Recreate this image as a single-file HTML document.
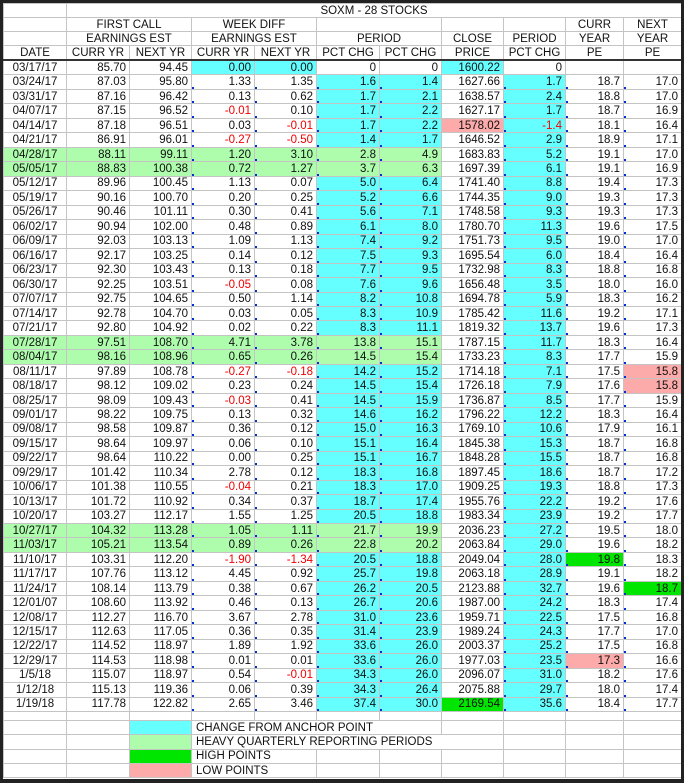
<!DOCTYPE html>
<html><head><meta charset="utf-8"><style>
html,body{margin:0;padding:0;background:#222;width:684px;height:783px;overflow:hidden}
#w{position:absolute;left:3px;top:3px;width:678px;height:776px;background:#fff;overflow:hidden}
table{border-collapse:collapse;table-layout:fixed;width:678px;font-family:"Liberation Sans",Arial,sans-serif;font-size:11.5px;color:#111}
td{border:1px solid #c4c4c4;padding:0 3px 0 0;text-align:right;white-space:nowrap;overflow:hidden;line-height:12px;position:relative}
tr.h td{text-align:center;padding:0;height:13px}
tr.h4 td{border-bottom:2px solid #333;height:13px}
tr.d td{height:13.48px}
tr.d td:first-child{text-align:center;padding:0}
tr.d:not(.f) td:nth-child(n+4):not(:nth-child(8))::after{content:"";position:absolute;left:0;bottom:0;width:2px;height:2px;background:#0030d0}
.c{background:#6ff}.g{background:#adfdad}.G{background:#00e600}.p{background:#fcaaaa}.r{color:#f00000}
tr.gr td:nth-child(-n+7){background:#adfdad}
tr.d td:nth-child(n+6):nth-child(-n+7),tr.d td:nth-child(9){background:#6ff}
tr.gr td:nth-child(n+6):nth-child(-n+7){background:#adfdad}
tr.f td:nth-child(n+6):nth-child(-n+7),tr.f td:nth-child(9){background:#fff}
tr.l td{height:13.3px;text-align:left;padding:0 0 0 4px}
tr.b td{height:8px}
</style></head><body><div id="w">
<table>
<colgroup><col style="width:63px"><col style="width:63px"><col style="width:62px"><col style="width:63px"><col style="width:62px"><col style="width:63px"><col style="width:62px"><col style="width:62px"><col style="width:62px"><col style="width:58px"><col style="width:58px"></colgroup>
<tr class="h"><td></td><td colspan="10">SOXM - 28 STOCKS</td></tr>
<tr class="h"><td></td><td colspan="2">FIRST CALL</td><td colspan="2">WEEK DIFF</td><td colspan="2"></td><td></td><td></td><td>CURR</td><td>NEXT</td></tr>
<tr class="h"><td></td><td colspan="2">EARNINGS EST</td><td colspan="2">EARNINGS EST</td><td colspan="2">PERIOD</td><td>CLOSE</td><td>PERIOD</td><td>YEAR</td><td>YEAR</td></tr>
<tr class="h h4"><td>DATE</td><td>CURR YR</td><td>NEXT YR</td><td>CURR YR</td><td>NEXT YR</td><td>PCT CHG</td><td>PCT CHG</td><td>PRICE</td><td>PCT CHG</td><td>PE</td><td>PE</td></tr>
<tr class="d f"><td>03/17/17</td><td>85.70</td><td>94.45</td><td class="c">0.00</td><td class="c">0.00</td><td>0</td><td>0</td><td class="c">1600.22</td><td>0</td><td></td><td></td></tr>
<tr class="d"><td>03/24/17</td><td>87.03</td><td>95.80</td><td>1.33</td><td>1.35</td><td>1.6</td><td>1.4</td><td>1627.66</td><td>1.7</td><td>18.7</td><td>17.0</td></tr>
<tr class="d"><td>03/31/17</td><td>87.16</td><td>96.42</td><td>0.13</td><td>0.62</td><td>1.7</td><td>2.1</td><td>1638.57</td><td>2.4</td><td>18.8</td><td>17.0</td></tr>
<tr class="d"><td>04/07/17</td><td>87.15</td><td>96.52</td><td class="r">-0.01</td><td>0.10</td><td>1.7</td><td>2.2</td><td>1627.17</td><td>1.7</td><td>18.7</td><td>16.9</td></tr>
<tr class="d"><td>04/14/17</td><td>87.18</td><td>96.51</td><td>0.03</td><td class="r">-0.01</td><td>1.7</td><td>2.2</td><td class="p">1578.02</td><td class="r">-1.4</td><td>18.1</td><td>16.4</td></tr>
<tr class="d"><td>04/21/17</td><td>86.91</td><td>96.01</td><td class="r">-0.27</td><td class="r">-0.50</td><td>1.4</td><td>1.7</td><td>1646.52</td><td>2.9</td><td>18.9</td><td>17.1</td></tr>
<tr class="d gr"><td>04/28/17</td><td>88.11</td><td>99.11</td><td>1.20</td><td>3.10</td><td>2.8</td><td>4.9</td><td>1683.83</td><td>5.2</td><td>19.1</td><td>17.0</td></tr>
<tr class="d gr"><td>05/05/17</td><td>88.83</td><td>100.38</td><td>0.72</td><td>1.27</td><td>3.7</td><td>6.3</td><td>1697.39</td><td>6.1</td><td>19.1</td><td>16.9</td></tr>
<tr class="d"><td>05/12/17</td><td>89.96</td><td>100.45</td><td>1.13</td><td>0.07</td><td>5.0</td><td>6.4</td><td>1741.40</td><td>8.8</td><td>19.4</td><td>17.3</td></tr>
<tr class="d"><td>05/19/17</td><td>90.16</td><td>100.70</td><td>0.20</td><td>0.25</td><td>5.2</td><td>6.6</td><td>1744.35</td><td>9.0</td><td>19.3</td><td>17.3</td></tr>
<tr class="d"><td>05/26/17</td><td>90.46</td><td>101.11</td><td>0.30</td><td>0.41</td><td>5.6</td><td>7.1</td><td>1748.58</td><td>9.3</td><td>19.3</td><td>17.3</td></tr>
<tr class="d"><td>06/02/17</td><td>90.94</td><td>102.00</td><td>0.48</td><td>0.89</td><td>6.1</td><td>8.0</td><td>1780.70</td><td>11.3</td><td>19.6</td><td>17.5</td></tr>
<tr class="d"><td>06/09/17</td><td>92.03</td><td>103.13</td><td>1.09</td><td>1.13</td><td>7.4</td><td>9.2</td><td>1751.73</td><td>9.5</td><td>19.0</td><td>17.0</td></tr>
<tr class="d"><td>06/16/17</td><td>92.17</td><td>103.25</td><td>0.14</td><td>0.12</td><td>7.5</td><td>9.3</td><td>1695.54</td><td>6.0</td><td>18.4</td><td>16.4</td></tr>
<tr class="d"><td>06/23/17</td><td>92.30</td><td>103.43</td><td>0.13</td><td>0.18</td><td>7.7</td><td>9.5</td><td>1732.98</td><td>8.3</td><td>18.8</td><td>16.8</td></tr>
<tr class="d"><td>06/30/17</td><td>92.25</td><td>103.51</td><td class="r">-0.05</td><td>0.08</td><td>7.6</td><td>9.6</td><td>1656.48</td><td>3.5</td><td>18.0</td><td>16.0</td></tr>
<tr class="d"><td>07/07/17</td><td>92.75</td><td>104.65</td><td>0.50</td><td>1.14</td><td>8.2</td><td>10.8</td><td>1694.78</td><td>5.9</td><td>18.3</td><td>16.2</td></tr>
<tr class="d"><td>07/14/17</td><td>92.78</td><td>104.70</td><td>0.03</td><td>0.05</td><td>8.3</td><td>10.9</td><td>1785.42</td><td>11.6</td><td>19.2</td><td>17.1</td></tr>
<tr class="d"><td>07/21/17</td><td>92.80</td><td>104.92</td><td>0.02</td><td>0.22</td><td>8.3</td><td>11.1</td><td>1819.32</td><td>13.7</td><td>19.6</td><td>17.3</td></tr>
<tr class="d gr"><td>07/28/17</td><td>97.51</td><td>108.70</td><td>4.71</td><td>3.78</td><td>13.8</td><td>15.1</td><td>1787.15</td><td>11.7</td><td>18.3</td><td>16.4</td></tr>
<tr class="d gr"><td>08/04/17</td><td>98.16</td><td>108.96</td><td>0.65</td><td>0.26</td><td>14.5</td><td>15.4</td><td>1733.23</td><td>8.3</td><td>17.7</td><td>15.9</td></tr>
<tr class="d"><td>08/11/17</td><td>97.89</td><td>108.78</td><td class="r">-0.27</td><td class="r">-0.18</td><td>14.2</td><td>15.2</td><td>1714.18</td><td>7.1</td><td>17.5</td><td class="p">15.8</td></tr>
<tr class="d"><td>08/18/17</td><td>98.12</td><td>109.02</td><td>0.23</td><td>0.24</td><td>14.5</td><td>15.4</td><td>1726.18</td><td>7.9</td><td>17.6</td><td class="p">15.8</td></tr>
<tr class="d"><td>08/25/17</td><td>98.09</td><td>109.43</td><td class="r">-0.03</td><td>0.41</td><td>14.5</td><td>15.9</td><td>1736.87</td><td>8.5</td><td>17.7</td><td>15.9</td></tr>
<tr class="d"><td>09/01/17</td><td>98.22</td><td>109.75</td><td>0.13</td><td>0.32</td><td>14.6</td><td>16.2</td><td>1796.22</td><td>12.2</td><td>18.3</td><td>16.4</td></tr>
<tr class="d"><td>09/08/17</td><td>98.58</td><td>109.87</td><td>0.36</td><td>0.12</td><td>15.0</td><td>16.3</td><td>1769.10</td><td>10.6</td><td>17.9</td><td>16.1</td></tr>
<tr class="d"><td>09/15/17</td><td>98.64</td><td>109.97</td><td>0.06</td><td>0.10</td><td>15.1</td><td>16.4</td><td>1845.38</td><td>15.3</td><td>18.7</td><td>16.8</td></tr>
<tr class="d"><td>09/22/17</td><td>98.64</td><td>110.22</td><td>0.00</td><td>0.25</td><td>15.1</td><td>16.7</td><td>1848.28</td><td>15.5</td><td>18.7</td><td>16.8</td></tr>
<tr class="d"><td>09/29/17</td><td>101.42</td><td>110.34</td><td>2.78</td><td>0.12</td><td>18.3</td><td>16.8</td><td>1897.45</td><td>18.6</td><td>18.7</td><td>17.2</td></tr>
<tr class="d"><td>10/06/17</td><td>101.38</td><td>110.55</td><td class="r">-0.04</td><td>0.21</td><td>18.3</td><td>17.0</td><td>1909.25</td><td>19.3</td><td>18.8</td><td>17.3</td></tr>
<tr class="d"><td>10/13/17</td><td>101.72</td><td>110.92</td><td>0.34</td><td>0.37</td><td>18.7</td><td>17.4</td><td>1955.76</td><td>22.2</td><td>19.2</td><td>17.6</td></tr>
<tr class="d"><td>10/20/17</td><td>103.27</td><td>112.17</td><td>1.55</td><td>1.25</td><td>20.5</td><td>18.8</td><td>1983.34</td><td>23.9</td><td>19.2</td><td>17.7</td></tr>
<tr class="d gr"><td>10/27/17</td><td>104.32</td><td>113.28</td><td>1.05</td><td>1.11</td><td>21.7</td><td>19.9</td><td>2036.23</td><td>27.2</td><td>19.5</td><td>18.0</td></tr>
<tr class="d gr"><td>11/03/17</td><td>105.21</td><td>113.54</td><td>0.89</td><td>0.26</td><td>22.8</td><td>20.2</td><td>2063.84</td><td>29.0</td><td>19.6</td><td>18.2</td></tr>
<tr class="d"><td>11/10/17</td><td>103.31</td><td>112.20</td><td class="r">-1.90</td><td class="r">-1.34</td><td>20.5</td><td>18.8</td><td>2049.04</td><td>28.0</td><td class="G">19.8</td><td>18.3</td></tr>
<tr class="d"><td>11/17/17</td><td>107.76</td><td>113.12</td><td>4.45</td><td>0.92</td><td>25.7</td><td>19.8</td><td>2063.18</td><td>28.9</td><td>19.1</td><td>18.2</td></tr>
<tr class="d"><td>11/24/17</td><td>108.14</td><td>113.79</td><td>0.38</td><td>0.67</td><td>26.2</td><td>20.5</td><td>2123.88</td><td>32.7</td><td>19.6</td><td class="G">18.7</td></tr>
<tr class="d"><td>12/01/07</td><td>108.60</td><td>113.92</td><td>0.46</td><td>0.13</td><td>26.7</td><td>20.6</td><td>1987.00</td><td>24.2</td><td>18.3</td><td>17.4</td></tr>
<tr class="d"><td>12/08/17</td><td>112.27</td><td>116.70</td><td>3.67</td><td>2.78</td><td>31.0</td><td>23.6</td><td>1959.71</td><td>22.5</td><td>17.5</td><td>16.8</td></tr>
<tr class="d"><td>12/15/17</td><td>112.63</td><td>117.05</td><td>0.36</td><td>0.35</td><td>31.4</td><td>23.9</td><td>1989.24</td><td>24.3</td><td>17.7</td><td>17.0</td></tr>
<tr class="d"><td>12/22/17</td><td>114.52</td><td>118.97</td><td>1.89</td><td>1.92</td><td>33.6</td><td>26.0</td><td>2003.37</td><td>25.2</td><td>17.5</td><td>16.8</td></tr>
<tr class="d"><td>12/29/17</td><td>114.53</td><td>118.98</td><td>0.01</td><td>0.01</td><td>33.6</td><td>26.0</td><td>1977.03</td><td>23.5</td><td class="p">17.3</td><td>16.6</td></tr>
<tr class="d"><td>1/5/18</td><td>115.07</td><td>118.97</td><td>0.54</td><td class="r">-0.01</td><td>34.3</td><td>26.0</td><td>2096.07</td><td>31.0</td><td>18.2</td><td>17.6</td></tr>
<tr class="d"><td>1/12/18</td><td>115.13</td><td>119.36</td><td>0.06</td><td>0.39</td><td>34.3</td><td>26.4</td><td>2075.88</td><td>29.7</td><td>18.0</td><td>17.4</td></tr>
<tr class="d"><td>1/19/18</td><td>117.78</td><td>122.82</td><td>2.65</td><td>3.46</td><td>37.4</td><td>30.0</td><td class="G">2169.54</td><td>35.6</td><td>18.4</td><td>17.7</td></tr>
<tr class="b"><td></td><td></td><td></td><td></td><td></td><td></td><td></td><td></td><td></td><td></td><td></td></tr>
<tr class="l"><td></td><td></td><td class="c"></td><td colspan="4">CHANGE FROM ANCHOR POINT</td><td></td><td></td><td></td><td></td></tr>
<tr class="l"><td></td><td></td><td class="g"></td><td colspan="5">HEAVY QUARTERLY REPORTING PERIODS</td><td></td><td></td><td></td></tr>
<tr class="l"><td></td><td></td><td class="G"></td><td colspan="2">HIGH POINTS</td><td></td><td></td><td></td><td></td><td></td><td></td></tr>
<tr class="l"><td></td><td></td><td class="p"></td><td colspan="2">LOW POINTS</td><td></td><td></td><td></td><td></td><td></td><td></td></tr>
</table></div></body></html>
